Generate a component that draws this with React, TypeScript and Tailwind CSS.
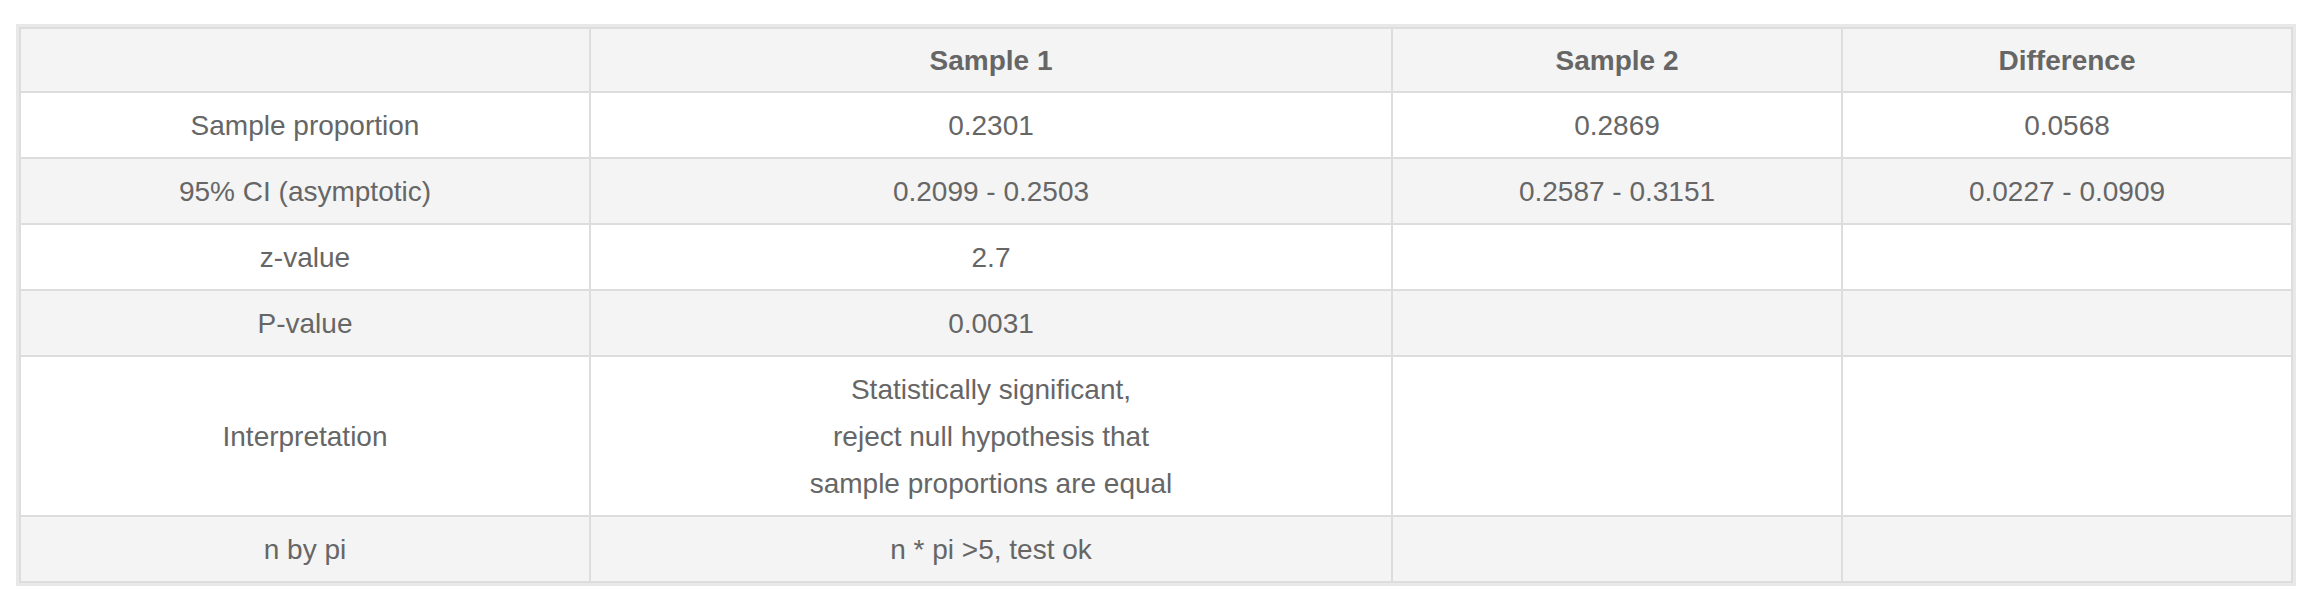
const rows: { label: string; s1: string[]; s2: string; diff: string }[] = [
  { label: "Sample proportion", s1: ["0.2301"], s2: "0.2869", diff: "0.0568" },
  { label: "95% CI (asymptotic)", s1: ["0.2099 - 0.2503"], s2: "0.2587 - 0.3151", diff: "0.0227 - 0.0909" },
  { label: "z-value", s1: ["2.7"], s2: "", diff: "" },
  { label: "P-value", s1: ["0.0031"], s2: "", diff: "" },
  {
    label: "Interpretation",
    s1: ["Statistically significant,", "reject null hypothesis that", "sample proportions are equal"],
    s2: "",
    diff: "",
  },
  { label: "n by pi", s1: ["n * pi >5, test ok"], s2: "", diff: "" },
];

export default function App() {
  const cell = "border-2 border-[#dddddd] px-4 text-center align-middle leading-[47px]";
  const td = cell + " py-[8.5px]";
  const th = cell + " py-[7.5px] font-bold";

  return (
    <div className="min-h-screen bg-white pt-[24px] pl-[16px] pr-[12px] font-['Liberation_Sans',Arial,sans-serif] text-[28px] text-[#666666]">
      <div className="border-[3px] border-[#e8e8e8]">
        <table className="w-full table-fixed border-collapse">
          <colgroup>
            <col className="w-[570px]" />
            <col className="w-[802px]" />
            <col className="w-[450px]" />
            <col />
          </colgroup>
          <thead>
            <tr className="bg-[#f4f4f4]">
              <th className={th}></th>
              <th className={th}>Sample 1</th>
              <th className={th}>Sample 2</th>
              <th className={th}>Difference</th>
            </tr>
          </thead>
          <tbody>
            {rows.map((r, i) => (
              <tr key={r.label} className={i % 2 === 0 ? "bg-white" : "bg-[#f4f4f4]"}>
                <td className={td}>{r.label}</td>
                <td className={td}>
                  {r.s1.map((line) => (
                    <div key={line}>{line}</div>
                  ))}
                </td>
                <td className={td}>{r.s2}</td>
                <td className={td}>{r.diff}</td>
              </tr>
            ))}
          </tbody>
        </table>
      </div>
    </div>
  );
}
